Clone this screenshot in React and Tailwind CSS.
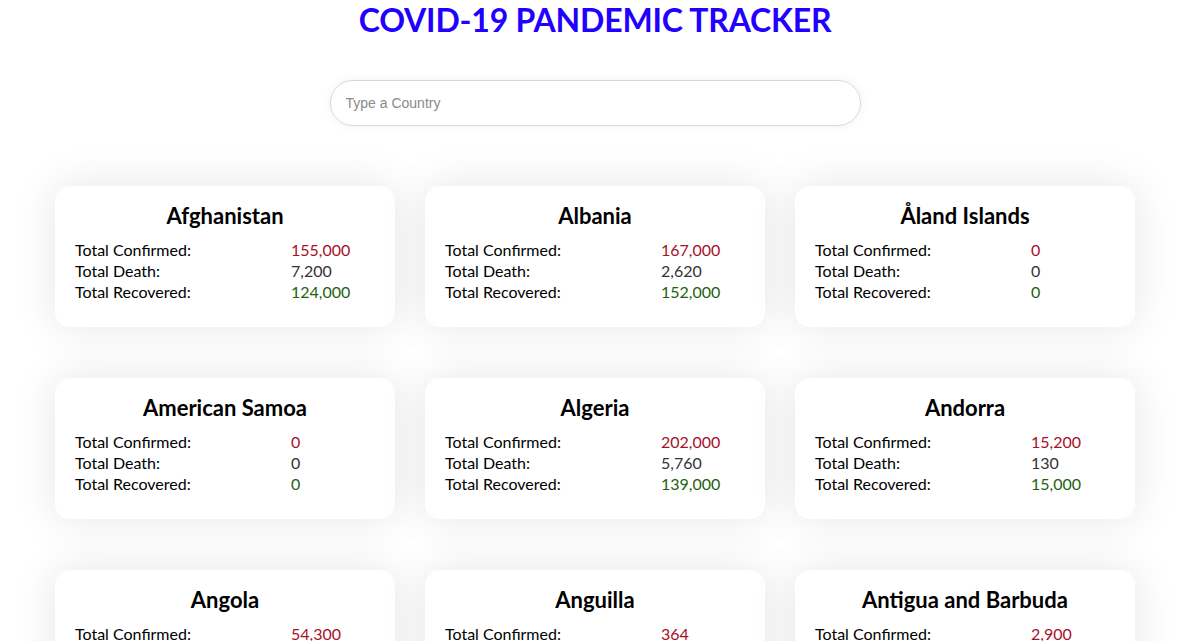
import React from "react";

const data = [
  ["Afghanistan", "155,000", "7,200", "124,000"],
  ["Albania", "167,000", "2,620", "152,000"],
  ["Åland Islands", "0", "0", "0"],
  ["American Samoa", "0", "0", "0"],
  ["Algeria", "202,000", "5,760", "139,000"],
  ["Andorra", "15,200", "130", "15,000"],
  ["Angola", "54,300", "1,480", "45,000"],
  ["Anguilla", "364", "1", "355"],
  ["Antigua and Barbuda", "2,900", "73", "2,750"],
];

function Card({ name, c, d, r }) {
  return (
    <div className="bg-white rounded-[15px] shadow-[0_0_45px_rgba(0,0,0,0.1)] px-5 pt-[17px] pb-[25px] h-[141px]">
      <h2 className="text-center text-[22px] font-bold leading-[26px] mb-[10px] text-black">{name}</h2>
      <div className="grid grid-cols-[216px_1fr] text-[16px] leading-[21px] text-black">
        <span>Total Confirmed:</span>
        <span className="text-[#a80f28]">{c}</span>
        <span>Total Death:</span>
        <span className="text-[#333333]">{d}</span>
        <span>Total Recovered:</span>
        <span className="text-[#23620c]">{r}</span>
      </div>
    </div>
  );
}

export default function App() {
  return (
    <div
      className="h-[641px] overflow-hidden bg-white pl-[7px]"
      style={{ fontFamily: "Lato, 'Noto Sans', sans-serif" }}
    >
      <h1 className="text-center text-[32px] font-bold leading-[40px] pt-0 text-[#2200ff] tracking-[-0.2px]">
        COVID-19 PANDEMIC TRACKER
      </h1>
      <div className="flex justify-center mt-[40px]">
        <input
          type="text"
          placeholder="Type a Country"
          className="w-[531px] h-[46px] rounded-[23px] border border-[#d9d9d9] px-[15px] text-[14px] shadow-[0_0_10px_rgba(0,0,0,0.06)] outline-none placeholder:text-[#8a8a8a]"
          style={{ fontFamily: "'Liberation Sans', Arial, sans-serif" }}
        />
      </div>
      <div className="grid grid-cols-[340px_340px_340px] gap-x-[30px] gap-y-[51px] justify-center mt-[60px]">
        {data.map(([n, c, d, r]) => (
          <Card key={n} name={n} c={c} d={d} r={r} />
        ))}
      </div>
    </div>
  );
}
